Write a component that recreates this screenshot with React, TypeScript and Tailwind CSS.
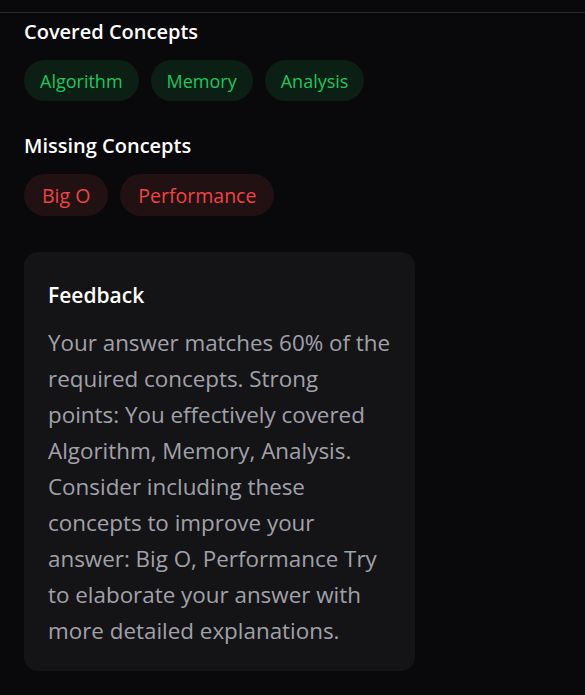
import React from 'react'

const covered = ['Algorithm', 'Memory', 'Analysis']
const missing = ['Big O', 'Performance']

function Pill({ label, tone }: { label: string; tone: 'green' | 'red' }) {
  return (
    <span
      className={
        tone === 'green'
          ? 'inline-flex h-[41px] items-center rounded-full bg-[#0c1f15] px-4 pt-[1px] text-[18px] text-[#22c55e]'
          : 'inline-flex h-[42px] items-center rounded-full bg-[#221113] px-[18px] pt-[1px] text-[19.5px] text-[#ef4444]'
      }
    >
      {label}
    </span>
  )
}

export default function App() {
  return (
    <div
      className="min-h-[695px] w-full bg-[#09090b] text-white"
      style={{ fontFamily: '"Open Sans", "Noto Sans", sans-serif' }}
    >
      <div className="h-[13px] border-b border-[#27272a]" />

      <div className="px-6">
        {/* Covered */}
        <h3 className="mt-[5px] text-[20px] font-semibold leading-[28px] text-white">Covered Concepts</h3>
        <div className="mt-[14px] flex gap-3">
          {covered.map(c => (
            <Pill key={c} label={c} tone="green" />
          ))}
        </div>

        {/* Missing */}
        <h3 className="mt-[31px] text-[20px] font-semibold leading-[28px] text-white">Missing Concepts</h3>
        <div className="mt-[14px] flex gap-3">
          {missing.map(c => (
            <Pill key={c} label={c} tone="red" />
          ))}
        </div>

        {/* Feedback card */}
        <div className="mt-[36px] w-[391px] rounded-[14px] bg-[#141416] pb-[22px] pl-6 pr-[23px] pt-[28px]">
          <h4 className="text-[21px] font-semibold leading-[30px] text-white">Feedback</h4>
          <p className="mt-[15px] text-[22.4px] leading-[36px] text-[#a1a1aa]">
            Your answer matches 60% of the required concepts. Strong points: You effectively covered
            Algorithm, Memory, Analysis. Consider including these concepts to improve your answer: Big O,
            Performance Try to elaborate your answer with more detailed explanations.
          </p>
        </div>
      </div>
    </div>
  )
}
